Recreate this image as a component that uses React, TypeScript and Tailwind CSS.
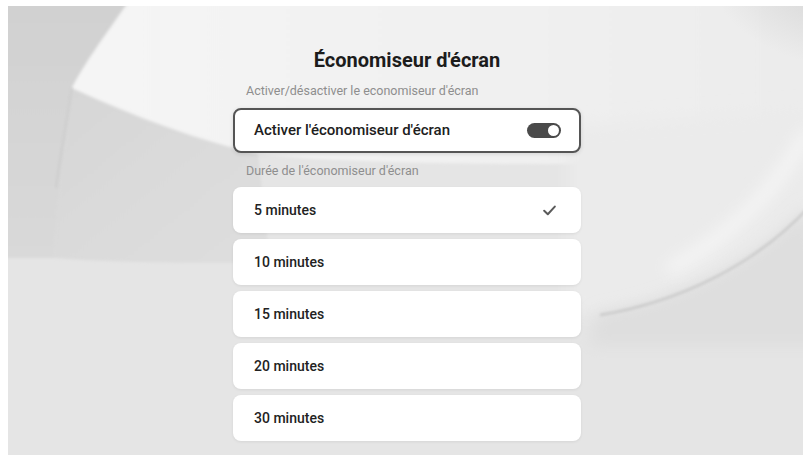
import { useState } from 'react';

const durations = ['5 minutes', '10 minutes', '15 minutes', '20 minutes', '30 minutes'];

function Backdrop() {
  return (
    <svg className="absolute inset-0 h-full w-full" viewBox="0 0 795 449" preserveAspectRatio="none">
      <defs>
        <filter id="blur-lg" x="-10%" y="-10%" width="120%" height="120%">
          <feGaussianBlur stdDeviation="8" />
        </filter>
        <filter id="blur-sm" x="-10%" y="-10%" width="120%" height="120%">
          <feGaussianBlur stdDeviation="1.5" />
        </filter>
        <linearGradient id="corner" x1="0" y1="0" x2="0" y2="1">
          <stop offset="0" stopColor="#d0d0d0" />
          <stop offset="1" stopColor="#d9d9d9" />
        </linearGradient>
        <linearGradient id="sweep" x1="0" y1="0" x2="1" y2="0">
          <stop offset="0" stopColor="#f5f5f5" />
          <stop offset="0.6" stopColor="#f0f0f0" />
          <stop offset="1" stopColor="#ebebeb" />
        </linearGradient>
        <linearGradient id="ribbon" x1="0" y1="0" x2="1" y2="1">
          <stop offset="0" stopColor="#d6d6d6" />
          <stop offset="1" stopColor="#dedede" />
        </linearGradient>
        <radialGradient id="tr" cx="1" cy="0" r="0.5">
          <stop offset="0" stopColor="#cfcfcf" />
          <stop offset="1" stopColor="#cfcfcf" stopOpacity="0" />
        </radialGradient>
      </defs>
      <rect width="795" height="449" fill="#e5e5e5" />
      <g filter="url(#blur-sm)">
        {/* shaded upper-left corner */}
        <path d="M-20,-20 L132,-20 C102,22 76,58 64,82 C56,140 50,190 46,252 L-20,252 Z" fill="url(#corner)" />
        {/* grey ribbon below the sweep */}
        <path d="M64,82 C130,112 190,134 250,148 L262,256 C180,258 100,256 46,252 C50,190 56,140 64,82 Z" fill="url(#ribbon)" />
        {/* white sweep */}
        <path d="M132,-20 L820,-20 L820,150 C700,160 380,162 250,148 C190,134 130,112 64,82 C76,58 102,22 132,-20 Z" fill="url(#sweep)" />
      </g>
      <path d="M64,82 C58,120 52,150 48,182" stroke="#c6c6c6" strokeWidth="1.2" fill="none" filter="url(#blur-sm)" />
      {/* right disc shading */}
      <rect x="560" y="-40" width="280" height="200" fill="url(#tr)" />
      <path d="M560,120 L820,100 L820,200 C760,258 680,296 590,308 L560,308 Z" fill="#ebebeb" filter="url(#blur-lg)" />
      <path d="M800,126 C765,190 715,235 660,264" stroke="#f8f8f8" strokeWidth="10" fill="none" filter="url(#blur-lg)" />
      <path d="M590,308 C670,295 745,258 800,200 L820,340 L580,340 Z" fill="#dedede" filter="url(#blur-lg)" />
      <path d="M800,202 C748,258 672,296 592,309" stroke="#b7b7b7" strokeWidth="1.3" fill="none" filter="url(#blur-sm)" />
    </svg>
  );
}

export default function App() {
  const [enabled, setEnabled] = useState(true);
  const [selected, setSelected] = useState('5 minutes');

  return (
    <div className="h-[459px] w-[809px] bg-white pb-[4px] pl-[8px] pr-[6px] pt-[6px]" style={{ fontFamily: 'Roboto, "Liberation Sans", sans-serif' }}>
      <div className="relative h-full w-full overflow-hidden">
        <Backdrop />
        <div className="relative flex w-[348px] flex-col ml-[225px] pt-[42px]">
          <h1 className="text-center text-[20px] font-bold leading-[24px] text-[#1c1c1c]">Économiseur d'écran</h1>

          <p className="mt-[12px] pl-[13px] text-[12.5px] leading-[14px] text-[#8e8e8e]">Activer/désactiver le economiseur d'écran</p>
          <button
            onClick={() => setEnabled(!enabled)}
            className="mt-[10px] flex h-[45px] items-center justify-between rounded-[8px] border-2 border-[#555555] bg-white pl-[19px] pr-[18px] shadow-[0_1px_4px_rgba(0,0,0,0.12)]"
          >
            <span className="text-[15px] font-medium text-[#202020]">Activer l'économiseur d'écran</span>
            <span className={`flex h-[15px] w-[34px] items-center rounded-full px-[2px] ${enabled ? 'justify-end bg-[#4a4a4a]' : 'justify-start bg-[#bbbbbb]'}`}>
              <span className="h-[11px] w-[11px] rounded-full bg-white" />
            </span>
          </button>

          <p className="mt-[11px] pl-[13px] text-[12.5px] leading-[14px] text-[#8e8e8e]">Durée de l'économiseur d'écran</p>
          <ul className="mt-[9px] flex flex-col gap-[6px]">
            {durations.map((d) => (
              <li key={d}>
                <button
                  onClick={() => setSelected(d)}
                  className="flex h-[46px] w-full items-center justify-between rounded-[8px] bg-white pl-[21px] pr-[25px] shadow-[0_1px_3px_rgba(0,0,0,0.07)]"
                >
                  <span className="text-[14px] font-medium text-[#222222]">{d}</span>
                  {selected === d && (
                    <svg width="13" height="11" viewBox="0 0 13 11" fill="none">
                      <path d="M1.2 5.8 L4.8 9.2 L11.8 1.6" stroke="#5a5a5a" strokeWidth="2" strokeLinecap="round" strokeLinejoin="round" />
                    </svg>
                  )}
                </button>
              </li>
            ))}
          </ul>
        </div>
      </div>
    </div>
  );
}
